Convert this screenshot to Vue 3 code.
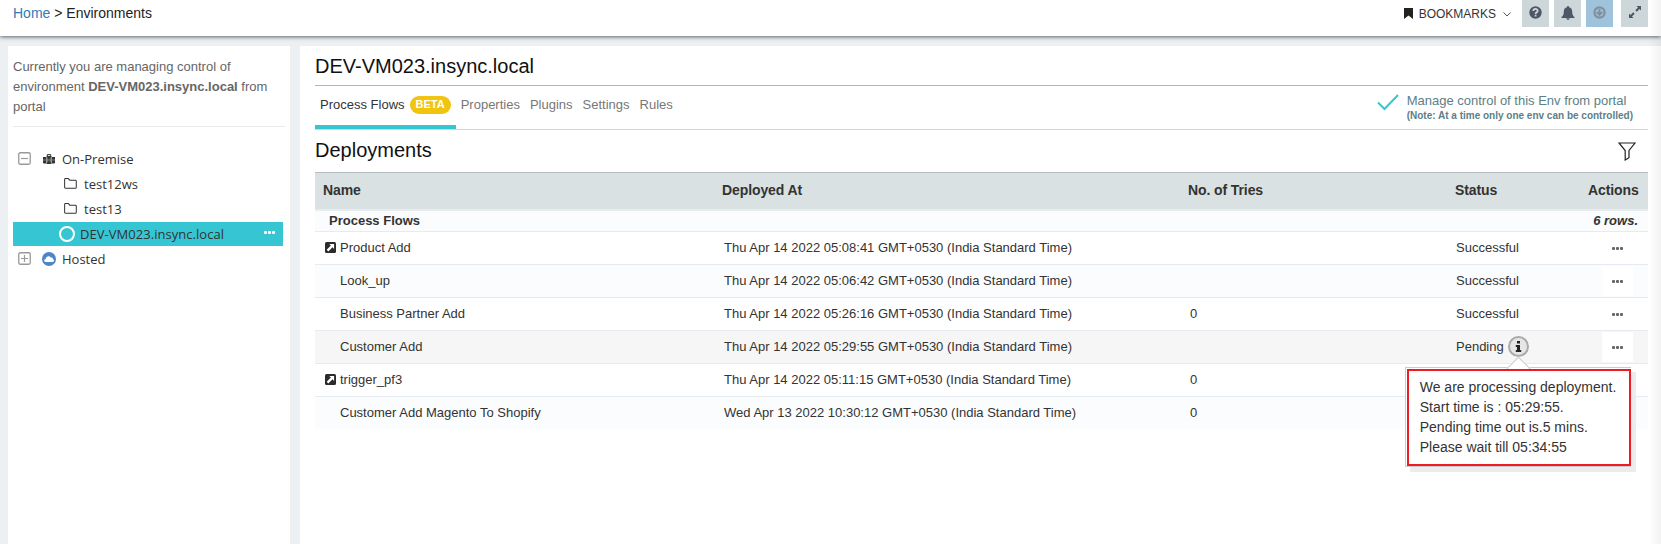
<template>
  <div class="page">
    <header class="topbar">
      <div class="breadcrumb"><a href="#">Home</a> &gt; Environments</div>
      <div class="tools">
        <svg class="bookmark-icon" viewBox="0 0 9 11"><path d="M0 0h9v11L4.500 7.500 0 11z" fill="#222" /></svg>
        <span class="bookmarks">BOOKMARKS</span>
        <svg class="chevron" viewBox="0 0 8 5"><path d="M.5.5 4 4 7.500.5" fill="none" stroke="#555" /></svg>
        <button class="tool">
          <svg width="13" height="13" viewBox="0 0 13 13">
            <circle cx="6.500" cy="6.500" r="6.200" fill="#4d5866" />
            <path d="M4.300 5C4.300 2.300 8.700 2.300 8.700 4.900 8.700 6.300 6.600 6.200 6.600 7.900" fill="none" stroke="#cdd7da" stroke-width="1.800" />
            <path d="M5.700 8.800h1.800v1.700H5.700z" fill="#cdd7da" />
          </svg>
        </button>
        <button class="tool">
          <svg width="14" height="14" viewBox="0 0 14 14">
            <path d="M7 0c.6 0 1 .4 1 1v.3c2.200.5 3.200 2 3.200 4.100 0 3 .8 4.400 2.300 5.600v1H.5v-1C2 9.800 2.800 8.400 2.800 5.400c0-2.100 1-3.600 3.200-4.100V1c0-.6.4-1 1-1zM5.300 12.200h3.400c0 2.200-3.400 2.200-3.400 0z" fill="#4d5866" />
          </svg>
        </button>
        <button class="tool active">
          <svg width="13" height="13" viewBox="0 0 13 13" fill="none" stroke="#80909d">
            <circle cx="6.500" cy="6.500" r="5.100" stroke-width="2.200" />
            <path d="M6.500 3v5.500M3.700 6l2.800 2.800L9.300 6" stroke-width="2" />
          </svg>
        </button>
        <button class="tool expand">
          <svg width="12" height="12" viewBox="0 0 12 12">
            <path d="M7.500 0H12v4.500l-1.500-1.500-2.700 2.700-1.500-1.500L9 1.500zM4.500 12H0V7.500L1.500 9l2.700-2.700 1.500 1.500L3 10.500z" fill="#4d5866" />
          </svg>
        </button>
      </div>
    </header>

    <div class="body">
      <aside class="sidebar">
        <p class="notice">
          Currently you are managing control of environment <b>DEV-VM023.insync.local</b> from portal
        </p>
        <ul class="tree">
          <li class="root">
            <svg class="toggle" viewBox="0 0 13 13" fill="none" stroke="#999"><rect x=".75" y=".75" width="11.500" height="11.500" rx="1.500" stroke-width="1.300" /><path d="M3 6.500h7" stroke-width="1.200" /></svg>
            <svg class="type-icon" viewBox="0 0 12 10">
              <path d="M0 3h3v6.500H1a1 1 0 0 1-1-1zM3.500 2h5v8h-5zM9 3h3v5.500a1 1 0 0 1-1 1H9z" fill="#333" />
              <path d="M4.300 2V.6h3.400V2" fill="none" stroke="#333" />
              <path d="M0 6h12M4.700 3.500v5M7.300 3.500v5" fill="none" stroke="#999" stroke-width=".7" />
            </svg>
            <span>On-Premise</span>
          </li>
          <li v-for="name in folders" :key="name" class="child">
            <svg class="folder" viewBox="0 0 14 12"><path d="M.6 10V1.600Q.6.6 1.600.6H4.600L6.200 2.400H12.200Q13.300 2.400 13.300 3.400V10Q13.300 11.200 12.200 11.200H1.700Q.6 11.200.6 10z" fill="none" stroke="#333" stroke-width="1.100" /></svg>
            <span>{{ name }}</span>
          </li>
          <li class="selected">
            <span class="ring"></span>
            <span class="env">DEV-VM023.insync.local</span>
            <span class="dots light"><i></i><i></i><i></i></span>
          </li>
          <li class="root">
            <svg class="toggle" viewBox="0 0 13 13" fill="none" stroke="#999"><rect x=".75" y=".75" width="11.500" height="11.500" rx="1.500" stroke-width="1.300" /><path d="M3 6.500h7M6.500 3v7" stroke-width="1.200" /></svg>
            <svg class="type-icon cloud" viewBox="0 0 14 14">
              <circle cx="7" cy="7" r="7" fill="#4a86c8" />
              <path d="M3.800 9.900C1.600 9.700 1.800 7 3.700 6.900 3.900 3.900 7.600 3.200 8.700 5.500 10.400 5.100 11.200 6.100 10.900 7.200 12.700 7.500 12.400 9.900 10.500 9.900z" fill="#fff" />
            </svg>
            <span>Hosted</span>
          </li>
        </ul>
      </aside>

      <main class="main">
        <h1>DEV-VM023.insync.local</h1>
        <div class="tabbar">
          <nav class="tabs">
            <a class="tab current">Process Flows <span class="badge">BETA</span></a>
            <a v-for="tab in tabs" :key="tab" class="tab">{{ tab }}</a>
          </nav>
          <div class="control">
            <svg width="22" height="17" viewBox="0 0 22 17"><path d="M1 8.500 7.500 15 21 1" fill="none" stroke="#36c6d3" stroke-width="2" /></svg>
            <div>
              <div class="control-title">Manage control of this Env from portal</div>
              <div class="control-note">(Note: At a time only one env can be controlled)</div>
            </div>
          </div>
        </div>
        <div class="section-head">
          <h2>Deployments</h2>
          <svg width="18" height="19" viewBox="0 0 18 19"><path d="M1 1h16L11 8.500v7.200L7.200 18V8.500z" fill="none" stroke="#222" stroke-width="1.200" /></svg>
        </div>

        <div class="table">
          <div class="row head">
            <span>Name</span><span>Deployed At</span><span>No. of Tries</span><span>Status</span><span>Actions</span>
          </div>
          <div class="group">
            <b>Process Flows</b>
            <em>{{ rows.length }} rows.</em>
          </div>
          <div v-for="(row, i) in rows" :key="row.name" class="row" :class="{ alt: i % 2, pending: row.pending }">
            <span class="name">
              <span class="link">
                <svg v-if="row.link" width="11" height="11" viewBox="0 0 11 11">
                  <rect width="11" height="11" rx="1.500" fill="#2b2b2b" />
                  <path d="M4.200 2h4.900v4.900L7.500 5.300 3.300 9.400 1.700 7.800 5.900 3.600z" fill="#fff" />
                </svg>
              </span>
              {{ row.name }}
            </span>
            <span class="date">{{ row.date }}</span>
            <span>{{ row.tries }}</span>
            <span class="status">
              {{ row.status }}
              <span v-if="row.pending" class="info">
                <svg width="7" height="11" viewBox="0 0 7 11"><path d="M2 0h3v2.500H2zM.8 4H5v5h1.200v2H.8V9H2V6H.8z" fill="#222" /></svg>
                <span class="tooltip">
                  <span class="tooltip-text">
                    We are processing deployment.<br />Start time is : 05:29:55.<br />Pending time out is.5 mins.<br />Please wait till 05:34:55
                  </span>
                </span>
              </span>
            </span>
            <span class="action"><span class="dots"><i></i><i></i><i></i></span></span>
          </div>
        </div>
      </main>
    </div>
    <div class="edge"></div>
  </div>
</template>

<script setup>
import { ref } from 'vue'

const folders = ref(['test12ws', 'test13'])
const tabs = ref(['Properties', 'Plugins', 'Settings', 'Rules'])

const rows = ref([
  { name: 'Product Add', date: 'Thu Apr 14 2022 05:08:41 GMT+0530 (India Standard Time)', tries: '', status: 'Successful', link: true },
  { name: 'Look_up', date: 'Thu Apr 14 2022 05:06:42 GMT+0530 (India Standard Time)', tries: '', status: 'Successful' },
  { name: 'Business Partner Add', date: 'Thu Apr 14 2022 05:26:16 GMT+0530 (India Standard Time)', tries: '0', status: 'Successful' },
  { name: 'Customer Add', date: 'Thu Apr 14 2022 05:29:55 GMT+0530 (India Standard Time)', tries: '', status: 'Pending', pending: true },
  { name: 'trigger_pf3', date: 'Thu Apr 14 2022 05:11:15 GMT+0530 (India Standard Time)', tries: '0', status: '', link: true },
  { name: 'Customer Add Magento To Shopify', date: 'Wed Apr 13 2022 10:30:12 GMT+0530 (India Standard Time)', tries: '0', status: '' }
])
</script>

<style>
body {
  margin: 0;
  overflow: hidden;
}
</style>

<style scoped>
* {
  box-sizing: border-box;
}
svg {
  display: block;
  flex: none;
}
.page {
  position: relative;
  display: flex;
  flex-direction: column;
  height: 544px;
  background: #ecf0f3;
  color: #333;
  font: 13px/20px "Liberation Sans", Arial, sans-serif;
  white-space: nowrap;
}
.topbar {
  display: flex;
  justify-content: space-between;
  height: 36px;
  padding: 0 13px;
  background: #fff;
  box-shadow: 0 1px 4px rgba(50, 60, 65, 0.8);
}
.breadcrumb {
  padding-top: 3px;
  font-size: 14px;
  color: #222;
}
.breadcrumb a {
  color: #337ab7;
  text-decoration: none;
}
.tools {
  display: flex;
  align-items: center;
  height: 27px;
}
.bookmark-icon {
  width: 9px;
  height: 11px;
  margin-right: 6px;
}
.bookmarks {
  font-size: 12px;
}
.chevron {
  width: 8px;
  height: 5px;
  margin: 1px 11px 0 7px;
}
.tool {
  display: flex;
  justify-content: center;
  width: 27px;
  height: 27px;
  margin-right: 5px;
  padding: 6px 0 0;
  border: 0;
  background: #cdd7da;
}
.tool.active {
  margin-right: 8px;
  background: #9fc3dc;
}
.tool.expand {
  margin-right: 0;
}
.body {
  display: flex;
  flex: 1;
  gap: 10px;
  padding: 10px 0 0 8px;
}
.sidebar {
  width: 282px;
  padding: 11px 5px 0;
  background: #fff;
}
.notice {
  margin: 0;
  padding-bottom: 9px;
  border-bottom: 1px solid #e9e9e9;
  color: #666;
  white-space: normal;
}
.tree {
  margin: 0;
  padding: 19px 0 0;
  list-style: none;
  color: #333;
  font-family: "Open Sans", "Noto Sans", sans-serif;
}
.tree li {
  display: flex;
  align-items: center;
  height: 25px;
}
.tree .root {
  padding-left: 5px;
}
.toggle {
  width: 13px;
  height: 13px;
  margin-right: 12px;
}
.type-icon {
  width: 12px;
  height: 10px;
  margin-right: 7px;
}
.cloud {
  width: 14px;
  height: 14px;
  margin: 0 6px 0 -1px;
}
.tree .child {
  padding-left: 51px;
}
.folder {
  width: 13px;
  height: 11px;
  margin-right: 7px;
}
.tree .selected {
  width: 270px;
  height: 24px;
  margin: 1px 0 0;
  padding: 0 8px 0 46px;
  background: #36c6d3;
}
.env {
  letter-spacing: 0.04px;
}
.ring {
  width: 16px;
  height: 16px;
  margin-right: 5px;
  border: 2px solid #fff;
  border-radius: 50%;
}
.dots {
  display: flex;
  gap: 1px;
}
.dots i {
  width: 3px;
  height: 3px;
  border-radius: 1px;
  background: #666;
}
.dots.light {
  margin: -4px 0 0 auto;
}
.dots.light i {
  background: #fff;
}
.main {
  flex: 1;
  padding: 0 13px 0 15px;
  background: #fff;
}
h1,
h2 {
  margin: 0;
  color: #111;
  font-size: 20px;
  font-weight: 400;
}
h1 {
  height: 40px;
  border-bottom: 1px solid #b5b5b5;
  line-height: 41px;
}
.tabbar {
  display: flex;
  justify-content: space-between;
  height: 44px;
  border-bottom: 1px solid #d9d0d2;
}
.tabs {
  display: flex;
  color: #777;
}
.tab {
  padding: 9px 10px 0 0;
}
.tab.current {
  display: flex;
  gap: 5px;
  height: 43px;
  margin-right: 5px;
  padding: 9px 5px 0;
  border-bottom: 4px solid #36c6d3;
  color: #333;
}
.badge {
  height: 18px;
  margin-top: 1px;
  padding: 0 6px;
  border-radius: 9px;
  background: #f1c40f;
  color: #fff;
  font-size: 11px;
  font-weight: 700;
  line-height: 17px;
}
.control {
  display: flex;
  gap: 8px;
  padding: 6px 15px 0 0;
  color: #5c8086;
}
.control svg {
  margin-top: 2px;
}
.control-title {
  line-height: 18px;
}
.control-note {
  font-size: 10px;
  font-weight: 700;
  line-height: 12px;
}
.section-head {
  display: flex;
  justify-content: space-between;
  height: 42px;
  padding: 10px 12px 0 0;
}
.section-head svg {
  margin-top: 2px;
}
.row {
  display: grid;
  grid-template-columns: 409px 466px 266px 140px 52px;
  height: 33px;
  border-top: 1px solid #e5ebf0;
  line-height: 31px;
}
.row.alt {
  background: #fbfcfe;
}
.row.pending {
  background: #f6f6f6;
}
.row.head {
  grid-template-columns: 399px 466px 267px 133px 60px;
  height: 39px;
  padding-left: 8px;
  border-top: 1px solid #b4bcbd;
  border-bottom: 2px solid #e7ecee;
  background: #d9e1e2;
  font-size: 14px;
  font-weight: 700;
  letter-spacing: -0.1px;
  line-height: 35px;
}
.group {
  display: flex;
  justify-content: space-between;
  height: 20px;
  padding: 0 10px 0 14px;
  background: #fbfcfe;
}
.group em {
  font-weight: 700;
}
.name {
  display: flex;
  padding-left: 10px;
}
.link {
  width: 15px;
  padding-top: 10px;
}
.status {
  display: flex;
  gap: 4px;
}
.info {
  position: relative;
  display: flex;
  align-items: center;
  justify-content: center;
  width: 21px;
  height: 21px;
  margin-top: 5px;
  border: 2px solid #aaa;
  border-radius: 50%;
  background: #e6e6e6;
}
.action {
  display: flex;
  align-items: center;
  justify-content: center;
  width: 31px;
  height: 30px;
  margin: 1px 0 0 6px;
  background: #fff;
}
.tooltip {
  position: absolute;
  z-index: 2;
  top: 29px;
  left: -105px;
  width: 226px;
  height: 100px;
  padding: 1px 0 1px 1px;
  border: 1px solid #ccc;
  border-right: 0;
  background: #fff;
  box-shadow: 5px 5px 0 #ececec;
}
.tooltip::before {
  content: "";
  position: absolute;
  top: -8px;
  left: 104px;
  width: 15px;
  height: 15px;
  border: 1px solid #ccc;
  background: #fff;
  transform: rotate(45deg);
}
.tooltip-text {
  position: relative;
  display: block;
  height: 97px;
  padding: 6px 11px;
  border: 2px solid #ed1c24;
  background: #fff;
  font-size: 14px;
  line-height: 20px;
}
.edge {
  position: absolute;
  top: 0;
  right: 0;
  width: 12px;
  height: 544px;
  background: linear-gradient(to right, rgba(0, 0, 0, 0), rgba(0, 0, 0, 0.05));
}
</style>
